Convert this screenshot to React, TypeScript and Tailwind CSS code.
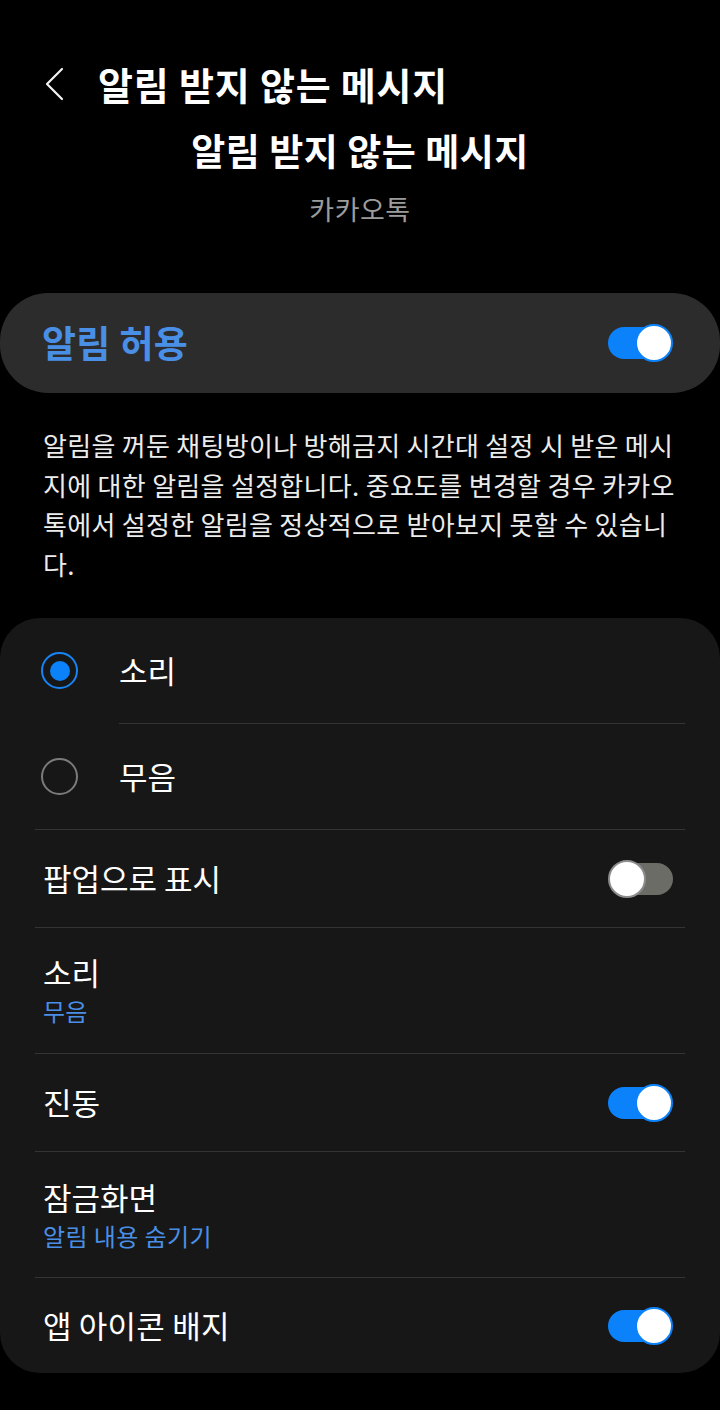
import React from "react";

function Toggle({ on }: { on: boolean }) {
    return (
        <div className="relative w-[65px] h-[38px] shrink-0">
            {on ? (
                <>
                    <div className="absolute left-0 top-[3px] w-[58px] h-[32px] rounded-full bg-[#0b82fa]" />
                    <div className="absolute right-0 top-0 w-[38px] h-[38px] rounded-full bg-white border-2 border-[#0b82fa]" />
                </>
            ) : (
                <>
                    <div className="absolute right-0 top-[3px] w-[58px] h-[32px] rounded-full bg-[#6c6c67]" />
                    <div className="absolute left-0 top-0 w-[38px] h-[38px] rounded-full bg-white border-2 border-[#8c8c8c]" />
                </>
            )}
        </div>
    );
}

function Radio({ checked }: { checked: boolean }) {
    return (
        <div
            className={`w-[37px] h-[37px] rounded-full border-2 flex items-center justify-center shrink-0 ${
                checked ? "border-[#1784f5]" : "border-[#7b7b7b]"
            }`}
        >
            {checked && <div className="w-[20px] h-[20px] rounded-full bg-[#0b82fa]" />}
        </div>
    );
}

const Divider = ({ inset = false }: { inset?: boolean }) => (
    <div className={`h-px bg-[#343434] ${inset ? "ml-[84px]" : ""}`} />
);

export default function App() {
    return (
        <div className="w-[720px] min-h-[1410px] bg-black text-white font-['Noto_Sans_CJK_KR','Noto_Sans',sans-serif]">
            {/* header */}
            <div className="pt-[60px] pl-[45px] flex items-center h-[108px]">
                <svg width="20" height="34" viewBox="0 0 20 34" fill="none" className="shrink-0">
                    <polyline points="17,2 2,17 17,32" stroke="#f2f2f2" strokeWidth="2.2" strokeLinecap="round" strokeLinejoin="round" />
                </svg>
                <h1 className="ml-[33px] text-[38px] leading-[48px] tracking-[0.8px] font-bold">알림 받지 않는 메시지</h1>
            </div>

            <div className="mt-[20px] text-center text-[37px] leading-[44px] tracking-[0.5px] font-bold">알림 받지 않는 메시지</div>
            <div className="mt-[19px] text-center text-[27px] leading-[36px] tracking-[0.5px] text-[#9c9c9c]">카카오톡</div>

            {/* master switch */}
            <div className="mt-[66px] h-[100px] rounded-[48px] bg-[#2c2c2c] flex items-center justify-between pl-[42px] pr-[47px]">
                <span className="text-[37px] tracking-[0.3px] font-bold text-[#4a8fe6]">알림 허용</span>
                <Toggle on />
            </div>

            <p className="mt-[32px] pl-[43px] w-[685px] text-[26px] leading-[39.5px] tracking-[0.3px] text-[#ececec]">
                알림을 꺼둔 채팅방이나 방해금지 시간대 설정 시 받은 메시지에 대한 알림을 설정합니다. 중요도를 변경할 경우 카카오톡에서 설정한 알림을 정상적으로 받아보지 못할 수 있습니다.
            </p>

            {/* settings card */}
            <div className="mt-[35px] rounded-[40px] bg-[#171717] px-[35px]">
                <div className="h-[105px] flex items-center pl-[6px]">
                    <Radio checked />
                    <span className="ml-[41px] text-[31px]">소리</span>
                </div>
                <Divider inset />
                <div className="h-[105px] flex items-center pl-[6px]">
                    <Radio checked={false} />
                    <span className="ml-[41px] text-[31px]">무음</span>
                </div>
                <Divider />
                <div className="h-[97px] flex items-center justify-between pl-[8px] pr-[12px]">
                    <span className="text-[31px]">팝업으로 표시</span>
                    <Toggle on={false} />
                </div>
                <Divider />
                <div className="h-[125px] flex flex-col justify-center pl-[8px] pt-[2px]">
                    <span className="text-[31px] leading-[36px]">소리</span>
                    <span className="mt-[3px] text-[24px] leading-[36px] tracking-[0.2px] text-[#4a8fe6]">무음</span>
                </div>
                <Divider />
                <div className="h-[97px] flex items-center justify-between pl-[8px] pr-[12px]">
                    <span className="text-[31px]">진동</span>
                    <Toggle on />
                </div>
                <Divider />
                <div className="h-[125px] flex flex-col justify-center pl-[8px] pt-[4px]">
                    <span className="text-[31px] leading-[36px]">잠금화면</span>
                    <span className="mt-[3px] text-[24px] leading-[36px] tracking-[0.4px] text-[#4a8fe6]">알림 내용 숨기기</span>
                </div>
                <Divider />
                <div className="h-[95px] flex items-center justify-between pl-[8px] pr-[12px]">
                    <span className="text-[31px] tracking-[0.2px]">앱 아이콘 배지</span>
                    <Toggle on />
                </div>
            </div>
        </div>
    );
}
